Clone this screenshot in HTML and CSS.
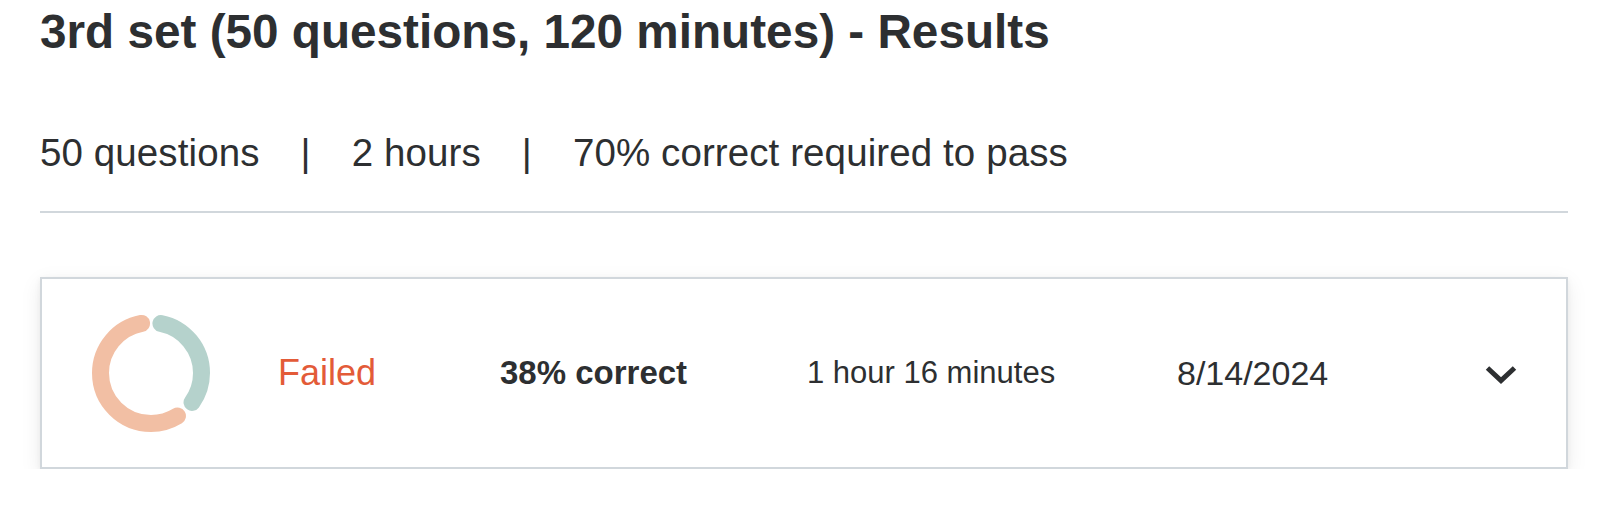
FILE: index.html
```html
<!DOCTYPE html>
<html lang="en">
<head>
<meta charset="utf-8">
<title>3rd set - Results</title>
<link rel="stylesheet" href="styles.css">
</head>
<body>
<div class="page">
  <h1 class="title">3rd set (50 questions, 120 minutes) - Results</h1>
  <div class="stats">
    <span>50 questions</span>
    <span class="sep">|</span>
    <span>2 hours</span>
    <span class="sep">|</span>
    <span>70% correct required to pass</span>
  </div>
  <div class="card">
    <svg class="donut" width="118" height="118" viewBox="0 0 118 118" aria-hidden="true">
      <g transform="rotate(-90 59 59)">
        <circle cx="59" cy="59" r="50.5" fill="none" stroke="#f2bfa4" stroke-width="17" stroke-linecap="round" stroke-dasharray="176.7 400" stroke-dashoffset="-130.6"/>
        <circle cx="59" cy="59" r="50.5" fill="none" stroke="#b5d2cc" stroke-width="17" stroke-linecap="round" stroke-dasharray="100.6 400" stroke-dashoffset="-10"/>
      </g>
    </svg>
    <div class="status">Failed</div>
    <div class="score">38% correct</div>
    <div class="time">1 hour 16 minutes</div>
    <div class="date">8/14/2024</div>
    <svg class="chevron" width="34" height="20" viewBox="0 0 34 20" aria-hidden="true">
      <polyline points="3.5,3 17,15.5 30.5,3" fill="none" stroke="#2d2f31" stroke-width="5" stroke-linejoin="miter"/>
    </svg>
  </div>
</div>
</body>
</html>
```

FILE: styles.css
```css
* {
  box-sizing: border-box;
}

body {
  margin: 0;
  background: #ffffff;
}

.page {
  width: 1568px;
  padding: 3px 0 0 40px;
  font-family: "Liberation Sans", Arial, sans-serif;
  color: #2d2f31;
}

.title {
  margin: 0;
  font-size: 47.7px;
  line-height: 57px;
  font-weight: 700;
}

.stats {
  margin-top: 66px;
  display: flex;
  align-items: center;
  font-size: 38.5px;
  letter-spacing: 0.1px;
  line-height: 53px;
  padding-bottom: 32px;
  border-bottom: 2px solid #d1d7dc;
}

.sep {
  margin: 0 41px;
}

.card {
  margin-top: 64px;
  height: 192px;
  border: 2px solid #d1d7dc;
  background: #ffffff;
  box-shadow: 0 2px 6px rgba(0, 0, 0, 0.06), 0 6px 20px rgba(0, 0, 0, 0.08);
  display: grid;
  grid-template-columns: 186px 222px 307px 370px 1fr auto;
  align-items: center;
  padding: 0 48px 0 50px;
}

.donut {
  display: block;
}

.status {
  font-size: 36px;
  color: #e35b38;
}

.score {
  font-size: 33px;
  font-weight: 700;
}

.time {
  font-size: 31px;
}

.date {
  font-size: 34px;
}

.chevron {
  display: block;
  margin-top: 3px;
}
```
